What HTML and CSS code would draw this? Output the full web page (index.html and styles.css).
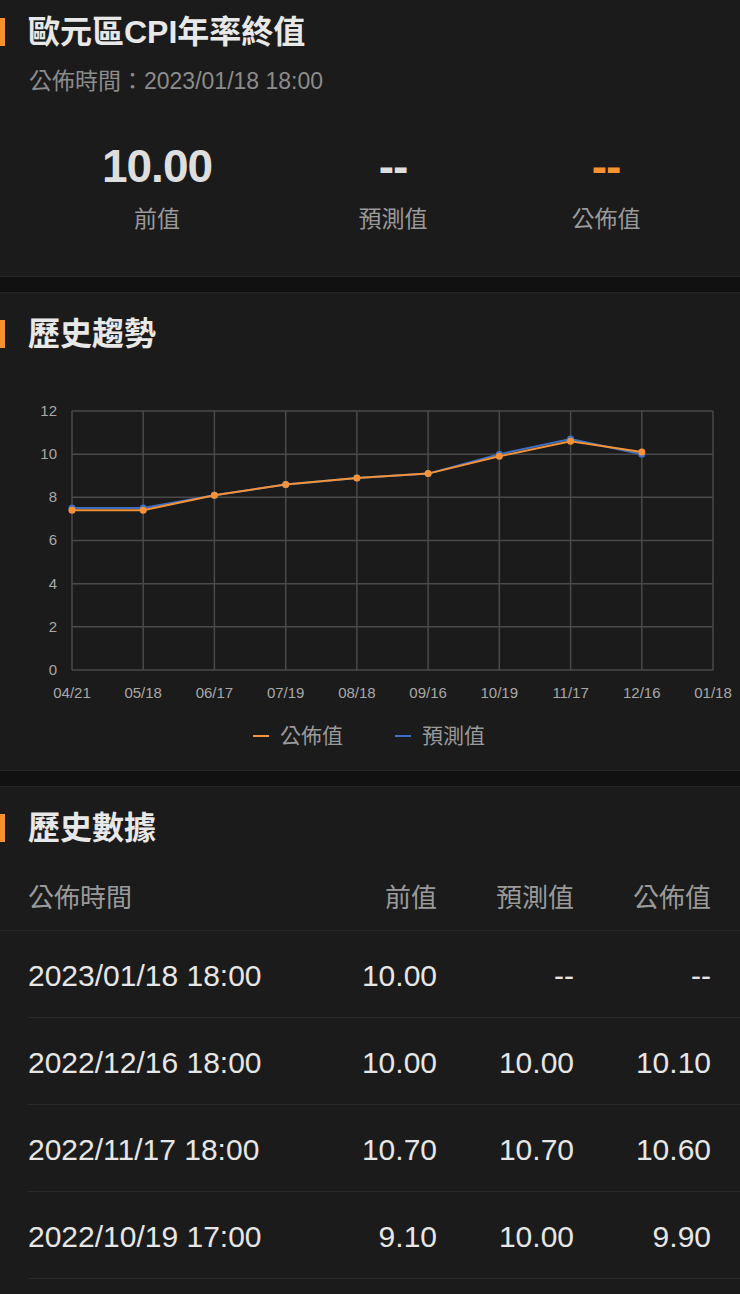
FILE: index.html
```html
<!DOCTYPE html>
<html lang="zh-Hant">
<head>
<meta charset="utf-8">
<title>歐元區CPI年率終值</title>
<link rel="stylesheet" href="styles.css">
</head>
<body>
<section class="card card-top">
  <h1 class="heading">歐元區CPI年率終值</h1>
  <div class="subtitle">公佈時間：2023/01/18 18:00</div>
  <div class="stats">
    <div class="stat"><div class="stat-value">10.00</div><div class="stat-label">前值</div></div>
    <div class="stat"><div class="stat-value">--</div><div class="stat-label">預測值</div></div>
    <div class="stat"><div class="stat-value orange">--</div><div class="stat-label">公佈值</div></div>
  </div>
</section>

<section class="card card-chart">
  <h2 class="heading">歷史趨勢</h2>
  <svg class="chart" width="740" height="315" viewBox="0 0 740 315" xmlns="http://www.w3.org/2000/svg">
    <g class="grid" stroke="#4a4a4a" stroke-width="1.5" fill="none">
      <line x1="72" y1="16" x2="713" y2="16"/>
      <line x1="72" y1="59.2" x2="713" y2="59.2"/>
      <line x1="72" y1="102.3" x2="713" y2="102.3"/>
      <line x1="72" y1="145.5" x2="713" y2="145.5"/>
      <line x1="72" y1="188.7" x2="713" y2="188.7"/>
      <line x1="72" y1="231.8" x2="713" y2="231.8"/>
      <line x1="72" y1="275" x2="713" y2="275"/>
      <line x1="72" y1="16" x2="72" y2="275"/>
      <line x1="143.2" y1="16" x2="143.2" y2="275"/>
      <line x1="214.4" y1="16" x2="214.4" y2="275"/>
      <line x1="285.7" y1="16" x2="285.7" y2="275"/>
      <line x1="356.9" y1="16" x2="356.9" y2="275"/>
      <line x1="428.1" y1="16" x2="428.1" y2="275"/>
      <line x1="499.3" y1="16" x2="499.3" y2="275"/>
      <line x1="570.6" y1="16" x2="570.6" y2="275"/>
      <line x1="641.8" y1="16" x2="641.8" y2="275"/>
      <line x1="713" y1="16" x2="713" y2="275"/>
    </g>
    <g class="axis" font-family="Liberation Sans, sans-serif" font-size="15" fill="#a8a8a8" text-anchor="end">
      <text x="57" y="21">12</text>
      <text x="57" y="64">10</text>
      <text x="57" y="107">8</text>
      <text x="57" y="150">6</text>
      <text x="57" y="194">4</text>
      <text x="57" y="237">2</text>
      <text x="57" y="280">0</text>
    </g>
    <g class="axis" font-family="Liberation Sans, sans-serif" font-size="15" fill="#a8a8a8" text-anchor="middle">
      <text x="72" y="303">04/21</text>
      <text x="143.2" y="303">05/18</text>
      <text x="214.4" y="303">06/17</text>
      <text x="285.7" y="303">07/19</text>
      <text x="356.9" y="303">08/18</text>
      <text x="428.1" y="303">09/16</text>
      <text x="499.3" y="303">10/19</text>
      <text x="570.6" y="303">11/17</text>
      <text x="641.8" y="303">12/16</text>
      <text x="713" y="303">01/18</text>
    </g>
    <g fill="#3f6fc2">
      <polyline fill="none" stroke="#3f6fc2" stroke-width="2" points="72,113.1 143.2,113.1 214.4,100.2 285.7,89.4 356.9,82.9 428.1,78.6 499.3,59.2 570.6,44.0 641.8,59.2"/>
      <circle cx="72" cy="113.1" r="3.5"/>
      <circle cx="143.2" cy="113.1" r="3.5"/>
      <circle cx="214.4" cy="100.2" r="3.5"/>
      <circle cx="285.7" cy="89.4" r="3.5"/>
      <circle cx="356.9" cy="82.9" r="3.5"/>
      <circle cx="428.1" cy="78.6" r="3.5"/>
      <circle cx="499.3" cy="59.2" r="3.5"/>
      <circle cx="570.6" cy="44.0" r="3.5"/>
      <circle cx="641.8" cy="59.2" r="3.5"/>
    </g>
    <g fill="#f39237">
      <polyline fill="none" stroke="#f39237" stroke-width="2" points="72,115.3 143.2,115.3 214.4,100.2 285.7,89.4 356.9,82.9 428.1,78.6 499.3,61.3 570.6,46.2 641.8,57.0"/>
      <circle cx="72" cy="115.3" r="3.5"/>
      <circle cx="143.2" cy="115.3" r="3.5"/>
      <circle cx="214.4" cy="100.2" r="3.5"/>
      <circle cx="285.7" cy="89.4" r="3.5"/>
      <circle cx="356.9" cy="82.9" r="3.5"/>
      <circle cx="428.1" cy="78.6" r="3.5"/>
      <circle cx="499.3" cy="61.3" r="3.5"/>
      <circle cx="570.6" cy="46.2" r="3.5"/>
      <circle cx="641.8" cy="57.0" r="3.5"/>
    </g>
  </svg>
  <div class="legend">
    <div class="legend-item"><span class="swatch swatch-orange"></span>公佈值</div>
    <div class="legend-item"><span class="swatch swatch-blue"></span>預測值</div>
  </div>
</section>

<section class="card card-table">
  <h2 class="heading">歷史數據</h2>
  <div class="table">
    <div class="thead">
      <div class="cell left">公佈時間</div>
      <div class="cell">前值</div>
      <div class="cell">預測值</div>
      <div class="cell">公佈值</div>
    </div>
    <div class="row">
      <div class="cell left">2023/01/18 18:00</div>
      <div class="cell">10.00</div>
      <div class="cell">--</div>
      <div class="cell">--</div>
    </div>
    <div class="row">
      <div class="cell left">2022/12/16 18:00</div>
      <div class="cell">10.00</div>
      <div class="cell">10.00</div>
      <div class="cell">10.10</div>
    </div>
    <div class="row">
      <div class="cell left">2022/11/17 18:00</div>
      <div class="cell">10.70</div>
      <div class="cell">10.70</div>
      <div class="cell">10.60</div>
    </div>
    <div class="row">
      <div class="cell left">2022/10/19 17:00</div>
      <div class="cell">9.10</div>
      <div class="cell">10.00</div>
      <div class="cell">9.90</div>
    </div>
  </div>
</section>
</body>
</html>
```

FILE: styles.css
```css
* { box-sizing: border-box; }

html, body {
  margin: 0;
  padding: 0;
  background: #111111;
  font-family: "Liberation Sans", "Noto Sans CJK TC", sans-serif;
  color: #e6e6e6;
}

.card {
  background: #1b1b1b;
  border-top: 1px solid #262626;
  border-bottom: 1px solid #262626;
}

.card-top {
  border-top: none;
  height: 277px;
  padding-top: 12px;
}

.card-chart {
  margin-top: 15px;
  height: 479px;
  padding-top: 21px;
}

.card-table {
  margin-top: 15px;
  padding-top: 21px;
  padding-bottom: 40px;
}

.heading {
  position: relative;
  margin: 0;
  padding-left: 28px;
  font-size: 32px;
  line-height: 40px;
  font-weight: bold;
  color: #e8e8e8;
  font-family: "Liberation Sans", "Noto Sans CJK TC", sans-serif;
}

.heading::before {
  content: "";
  position: absolute;
  left: 0;
  top: 6px;
  width: 5px;
  height: 28px;
  background: #f7922e;
}

.subtitle {
  margin-top: 14px;
  padding-left: 29px;
  font-size: 23px;
  line-height: 30px;
  color: #8c8c8c;
}

.stats {
  display: grid;
  grid-template-columns: 314px 158px 268px;
  margin-top: 42px;
}

.stat {
  text-align: center;
}

.stat-value {
  font-size: 46px;
  line-height: 56px;
  font-weight: bold;
  color: #dedede;
  letter-spacing: -1px;
}

.stat-value.orange {
  color: #f7922e;
}

.stat-label {
  margin-top: 10px;
  font-size: 23px;
  line-height: 30px;
  color: #9a9a9a;
}

.chart {
  display: block;
  margin-top: 41px;
}

.legend {
  display: flex;
  justify-content: center;
  gap: 52px;
  margin-top: 11px;
  padding-right: 2px;
}

.legend-item {
  display: flex;
  align-items: center;
  font-size: 21px;
  line-height: 30px;
  color: #9a9a9a;
}

.swatch {
  display: inline-block;
  width: 16px;
  height: 2px;
  margin-right: 11px;
}

.swatch-orange { background: #f39237; }
.swatch-blue { background: #3f6fc2; }

.table {
  margin-top: 12px;
}

.thead,
.row {
  display: grid;
  grid-template-columns: 1fr 137px 137px 137px;
  align-items: center;
  padding-right: 29px;
}

.thead {
  height: 71px;
  padding-left: 28px;
  border-bottom: 1px solid #262626;
  font-size: 26px;
  color: #9a9a9a;
}

.row {
  height: 87px;
  margin-left: 28px;
  border-bottom: 1px solid #2a2a2a;
  font-size: 30px;
  color: #e6e6e6;
  letter-spacing: 0;
  padding-top: 4px;
}

.cell {
  text-align: right;
  white-space: nowrap;
}

.cell.left {
  text-align: left;
}
```
